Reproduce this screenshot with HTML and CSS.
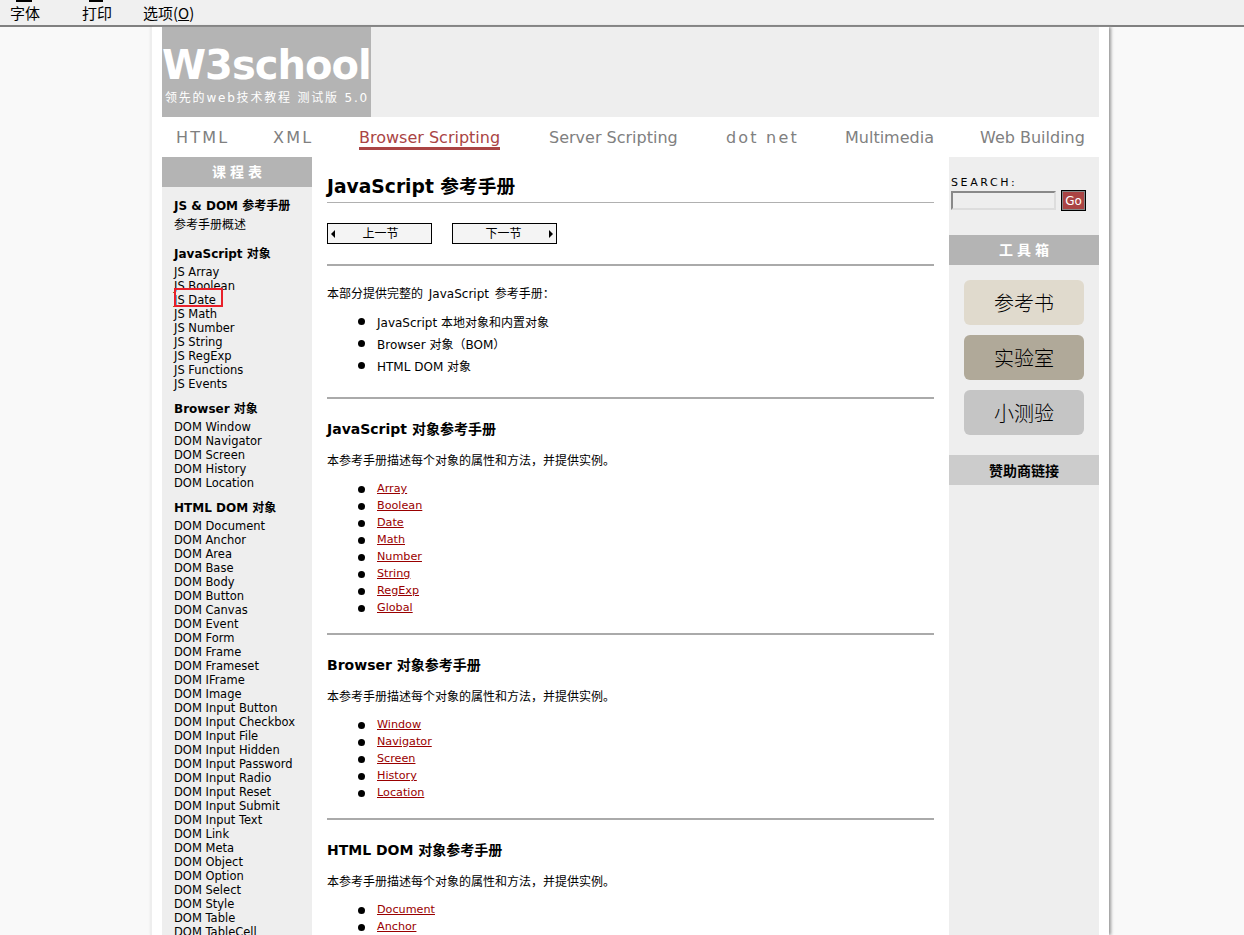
FILE: index.html
```html
<!DOCTYPE html>
<html lang="en">
  <head>
    <meta charset="UTF-8" />
    <title>JavaScript 参考手册</title>
    <link rel="stylesheet" href="styles.css">
  </head>
  <body>
    <div class="menu-bar">
      <span class="menu-item menu-font">字体</span>
      <span class="menu-item menu-print">打印</span>
      <span class="menu-item">选项(<u>O</u>)</span>
    </div>
    <div class="wrapper">
      <div class="page">
        <div class="header">
          <div class="logo">
            <div class="logo-title">W3school</div>
            <div class="logo-sub">领先的web技术教程 测试版 5.0</div>
          </div>
        </div>
        <div class="top-nav">
          <a class="wide">HTML</a>
          <a class="wide">XML</a>
          <a class="active">Browser Scripting</a>
          <a>Server Scripting</a>
          <a class="wide">dot net</a>
          <a>Multimedia</a>
          <a>Web Building</a>
        </div>
        <div class="columns">
          <div class="left-col">
            <div class="col-title">课程表</div>
            <div class="left-nav">
              <h2>JS &amp; DOM 参考手册</h2>
              <div class="nav-group first-group">
                <a class="nav-cn">参考手册概述</a>
              </div>
              <h2>JavaScript 对象</h2>
              <div class="nav-group">
                <a>JS Array</a>
                <a>JS Boolean</a>
                <a class="marked">JS Date</a>
                <a>JS Math</a>
                <a>JS Number</a>
                <a>JS String</a>
                <a>JS RegExp</a>
                <a>JS Functions</a>
                <a>JS Events</a>
              </div>
              <h2>Browser 对象</h2>
              <div class="nav-group">
                <a>DOM Window</a>
                <a>DOM Navigator</a>
                <a>DOM Screen</a>
                <a>DOM History</a>
                <a>DOM Location</a>
              </div>
              <h2>HTML DOM 对象</h2>
              <div class="nav-group">
                <a>DOM Document</a>
                <a>DOM Anchor</a>
                <a>DOM Area</a>
                <a>DOM Base</a>
                <a>DOM Body</a>
                <a>DOM Button</a>
                <a>DOM Canvas</a>
                <a>DOM Event</a>
                <a>DOM Form</a>
                <a>DOM Frame</a>
                <a>DOM Frameset</a>
                <a>DOM IFrame</a>
                <a>DOM Image</a>
                <a>DOM Input Button</a>
                <a>DOM Input Checkbox</a>
                <a>DOM Input File</a>
                <a>DOM Input Hidden</a>
                <a>DOM Input Password</a>
                <a>DOM Input Radio</a>
                <a>DOM Input Reset</a>
                <a>DOM Input Submit</a>
                <a>DOM Input Text</a>
                <a>DOM Link</a>
                <a>DOM Meta</a>
                <a>DOM Object</a>
                <a>DOM Option</a>
                <a>DOM Select</a>
                <a>DOM Style</a>
                <a>DOM Table</a>
                <a>DOM TableCell</a>
              </div>
            </div>
          </div>

          <div class="content">
            <h1>JavaScript 参考手册</h1>
            <div class="pager">
              <a class="pager-btn prev"><span class="arrow arrow-left"></span>上一节</a>
              <a class="pager-btn next"><span class="arrow arrow-right"></span>下一节</a>
            </div>
            <hr class="rule first-rule" />
            <p class="intro">本部分提供完整的 JavaScript 参考手册：</p>
            <ul class="plain-list">
              <li>JavaScript 本地对象和内置对象</li>
              <li>Browser 对象（BOM）</li>
              <li>HTML DOM 对象</li>
            </ul>
            <hr class="rule" />
            <h3>JavaScript 对象参考手册</h3>
            <p class="desc">本参考手册描述每个对象的属性和方法，并提供实例。</p>
            <ul class="link-list">
              <li><a>Array</a></li>
              <li><a>Boolean</a></li>
              <li><a>Date</a></li>
              <li><a>Math</a></li>
              <li><a>Number</a></li>
              <li><a>String</a></li>
              <li><a>RegExp</a></li>
              <li><a>Global</a></li>
            </ul>
            <hr class="rule" />
            <h3>Browser 对象参考手册</h3>
            <p class="desc">本参考手册描述每个对象的属性和方法，并提供实例。</p>
            <ul class="link-list">
              <li><a>Window</a></li>
              <li><a>Navigator</a></li>
              <li><a>Screen</a></li>
              <li><a>History</a></li>
              <li><a>Location</a></li>
            </ul>
            <hr class="rule" />
            <h3>HTML DOM 对象参考手册</h3>
            <p class="desc">本参考手册描述每个对象的属性和方法，并提供实例。</p>
            <ul class="link-list">
              <li><a>Document</a></li>
              <li><a>Anchor</a></li>
              <li><a>Area</a></li>
            </ul>
          </div>

          <div class="right-col">
            <div class="search">
              <div class="search-label">SEARCH:</div>
              <div class="search-row">
                <input class="search-input" type="text" />
                <button class="search-btn">Go</button>
              </div>
            </div>
            <div class="col-title">工具箱</div>
            <div class="tools">
              <a class="tool tool-book">参考书</a>
              <a class="tool tool-lab">实验室</a>
              <a class="tool tool-quiz">小测验</a>
            </div>
            <div class="sponsor">赞助商链接</div>
          </div>
        </div>
      </div>
    </div>
  </body>
</html>
```

FILE: styles.css
```css
html,
body {
  height: 100%;
  margin: 0;
  overflow: hidden;
}
body {
  font-family: "DejaVu Sans", "Noto Sans CJK SC", sans-serif;
  font-size: 11.5px;
  background-color: #f9f9f9;
  color: #000000;
}
.menu-bar {
  display: flex;
  height: 25px;
  background-color: #f0f0f0;
  border-bottom: 2px solid #808080;
  padding-left: 10px;
  font-size: 15px;
  line-height: 25px;
  font-family: "Noto Sans CJK SC", sans-serif;
}
.menu-item {
  position: relative;
  display: block;
  white-space: nowrap;
}
/* bottoms of the row scrolled off above the window */
.menu-font::before,
.menu-print::before {
  content: "";
  position: absolute;
  top: 0;
  height: 2px;
  background-color: #000000;
}
.menu-font::before {
  left: 6px;
  width: 16px;
}
.menu-print::before {
  left: 7px;
  width: 14px;
}
.menu-font {
  width: 72px;
}
.menu-print {
  width: 61px;
}
.wrapper {
  width: 959px;
  margin-left: 150px;
  padding: 0 10px;
  box-sizing: border-box;
  background-color: #ffffff;
  border-left: 2px solid #eeeeee;
  box-shadow: 2px 0 3px #999999;
  height: 908px;
  overflow: hidden;
}
.page {
  width: 937px;
}
.header {
  height: 90px;
  background-color: #eeeeee;
}
.logo {
  width: 209px;
  height: 90px;
  background-color: #b4b4b4;
  color: #ffffff;
  overflow: hidden;
}
.logo-title {
  font-size: 40px;
  font-weight: bold;
  letter-spacing: -1px;
  line-height: 48px;
  margin-top: 14px;
  white-space: nowrap;
}
.logo-sub {
  font-size: 12px;
  letter-spacing: 1.8px;
  line-height: 16px;
  margin-top: 1px;
  padding-left: 3px;
  white-space: nowrap;
}
.top-nav {
  display: grid;
  grid-template-columns: 97px 86px 190px 177px 119px 135px auto;
  justify-items: start;
  height: 40px;
  padding-left: 14px;
  font-size: 16px;
  line-height: 41px;
  color: #808080;
}
.top-nav .wide {
  letter-spacing: 2.2px;
}
.top-nav .active {
  color: #aa4444;
  height: 30px;
  border-bottom: 3px solid #aa4444;
}
.columns {
  display: flex;
  align-items: stretch;
  height: 800px;
}
.left-col,
.right-col {
  width: 150px;
  flex: none;
  background-color: #eeeeee;
}
.col-title {
  height: 30px;
  background-color: #b4b4b4;
  color: #ffffff;
  font-size: 14px;
  font-weight: bold;
  letter-spacing: 4px;
  text-indent: 4px;
  line-height: 30px;
  text-align: center;
}
.left-nav {
  padding: 10px 0 0 12px;
}
.left-nav h2 {
  font-size: 12px;
  font-weight: bold;
  line-height: 18px;
  margin: 0 0 2px;
}
.nav-group {
  margin-bottom: 9px;
}
.first-group {
  margin-bottom: 12px;
}
.nav-group a {
  display: block;
  line-height: 14px;
  white-space: nowrap;
}
.nav-group .nav-cn {
  font-size: 12px;
  line-height: 16px;
}
.nav-group .marked {
  position: relative;
}
.nav-group .marked::after {
  content: "";
  position: absolute;
  left: 0;
  top: -5px;
  width: 45px;
  height: 15px;
  border: 2px solid #e8202a;
}
.content {
  flex: 1;
  padding: 0 15px;
  min-width: 0;
  font-size: 12px;
}
.content h1 {
  font-size: 18.7px;
  font-weight: bold;
  line-height: 26px;
  margin: 17px 0 0;
  padding-bottom: 2px;
  border-bottom: 1px solid #b0b0b0;
}
.pager {
  display: flex;
  gap: 20px;
  margin-top: 20px;
}
.pager-btn {
  position: relative;
  display: block;
  width: 105px;
  height: 21px;
  box-sizing: border-box;
  border: 1px solid #000000;
  background-color: #f4f4f4;
  line-height: 20px;
  text-align: center;
}
.pager-btn.prev {
  padding-left: 2px;
}
.pager-btn.next {
  padding-right: 2px;
}
.arrow {
  position: absolute;
  top: 6px;
  width: 0;
  height: 0;
  border-top: 4px solid transparent;
  border-bottom: 4px solid transparent;
}
.arrow-left {
  left: 3px;
  border-right: 4px solid #000000;
}
.arrow-right {
  right: 3px;
  border-left: 4px solid #000000;
}
.rule {
  height: 2px;
  margin: 0;
  border: 0;
  background-color: #aaaaaa;
}
.first-rule {
  margin-top: 20px;
}
.intro {
  margin: 20px 0 0;
  line-height: 16px;
  word-spacing: 2px;
}
.plain-list {
  list-style: none;
  margin: 10px 0 19px;
  padding: 0 0 0 50px;
}
.plain-list li,
.link-list li {
  position: relative;
}
.plain-list li {
  line-height: 22px;
}
.plain-list li::before,
.link-list li::before {
  content: "";
  position: absolute;
  left: -19px;
  top: 6px;
  width: 7px;
  height: 7px;
  border-radius: 50%;
  background-color: #000000;
}
.content h3 {
  font-size: 14px;
  font-weight: bold;
  line-height: 18px;
  margin: 21px 0 0;
}
.desc {
  margin: 15px 0 0;
  line-height: 16px;
}
.link-list {
  list-style: none;
  margin: 11px 0 17px;
  padding: 0 0 0 50px;
  font-size: 11.2px;
  line-height: 17px;
}
.link-list a {
  color: #990000;
  text-decoration: underline;
}
.search {
  height: 78px;
  padding: 19px 0 0 2px;
  box-sizing: border-box;
}
.search-label {
  font-size: 11px;
  letter-spacing: 2.6px;
  line-height: 14px;
}
.search-row {
  display: flex;
  align-items: center;
  gap: 5px;
}
.search-input {
  width: 105px;
  height: 19px;
  padding: 0;
  box-sizing: border-box;
  border: 2px inset #dddddd;
  background-color: #eeeeee;
}
.search-btn {
  width: 25px;
  height: 21px;
  padding: 0;
  box-sizing: border-box;
  border: 1px solid #000000;
  outline: 1px solid #888888;
  outline-offset: -2px;
  background-color: #aa4444;
  color: #ffffff;
  font-family: "DejaVu Sans", sans-serif;
  font-size: 12px;
}
.tools {
  display: flex;
  flex-direction: column;
  gap: 10px;
  padding: 15px 15px 20px;
}
.tool {
  display: block;
  height: 45px;
  border-radius: 6px;
  font-size: 20px;
  line-height: 45px;
  text-align: center;
  font-family: "Noto Sans CJK SC", sans-serif;
  font-weight: 300;
}
.tool-book {
  background-color: #e0dacd;
}
.tool-lab {
  background-color: #b0a999;
}
.tool-quiz {
  background-color: #c5c5c5;
}
.sponsor {
  height: 30px;
  background-color: #cccccc;
  font-size: 14px;
  font-weight: bold;
  line-height: 32px;
  text-align: center;
}
```
